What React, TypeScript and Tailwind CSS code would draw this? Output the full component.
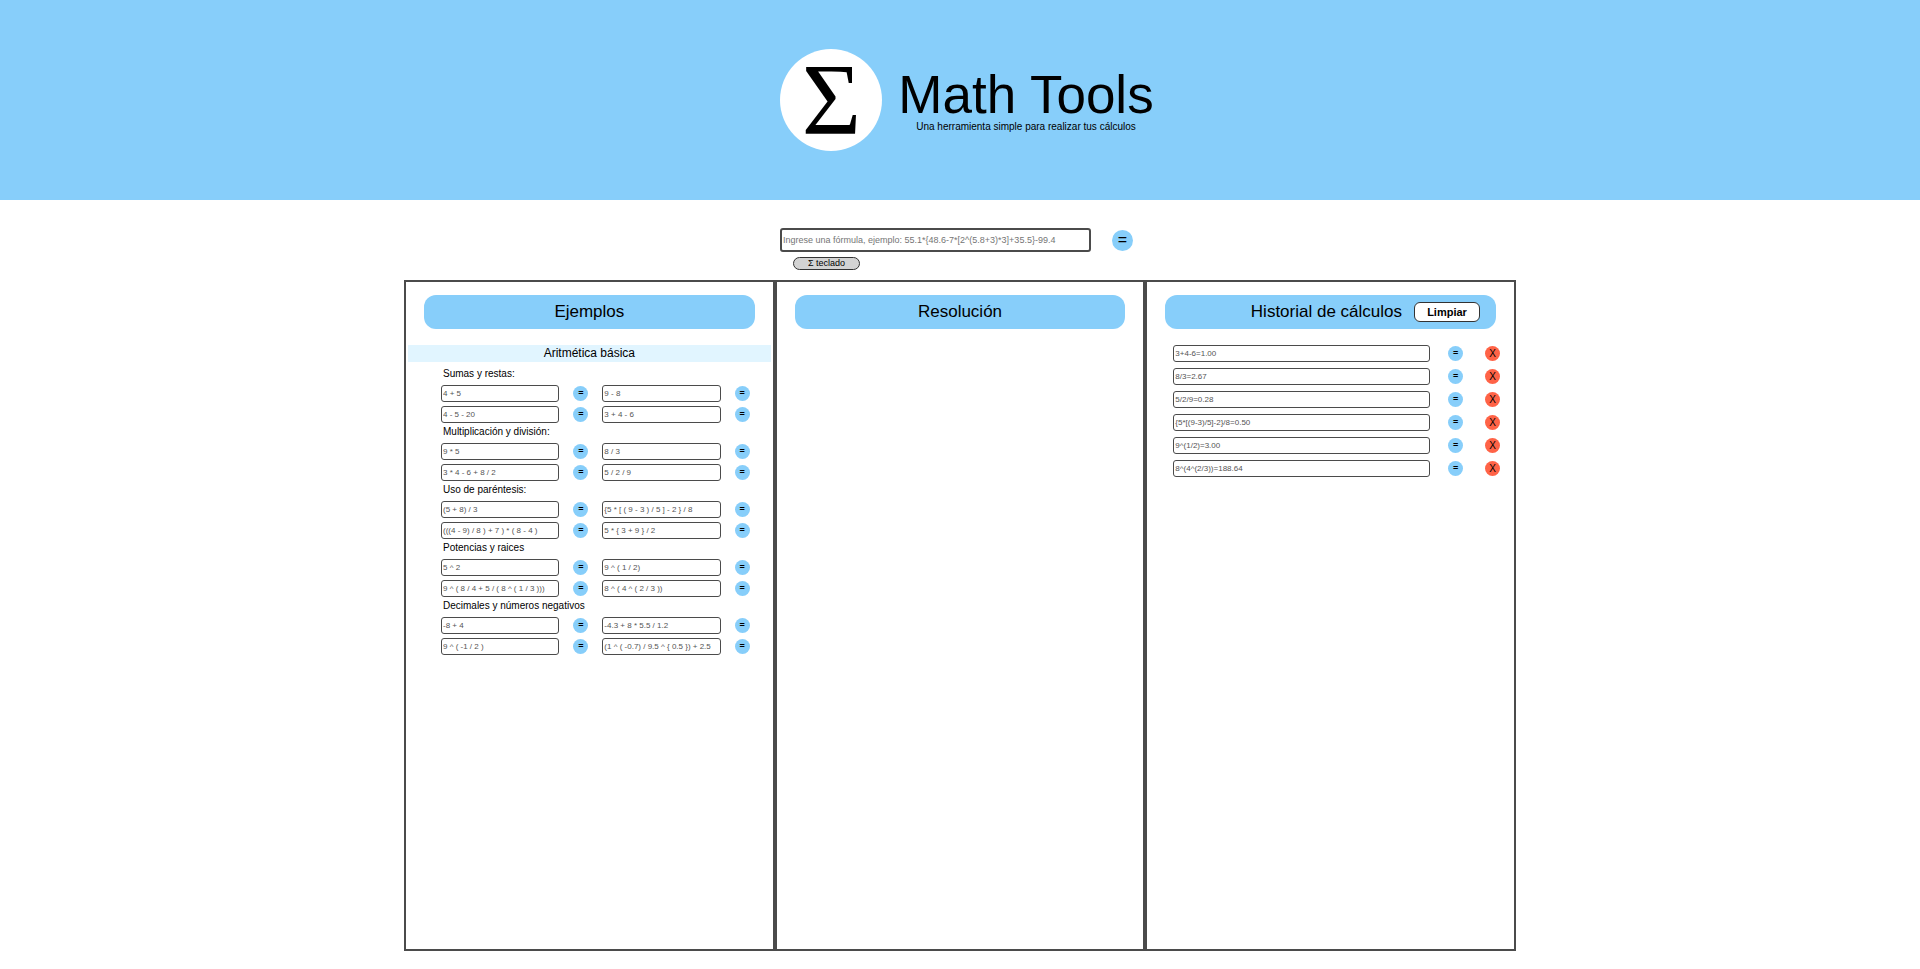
import { useState } from "react";

const groups = [
  { title: "Sumas y restas:", items: ["4 + 5", "9 - 8", "4 - 5 - 20", "3 + 4 - 6"] },
  { title: "Multiplicación y división:", items: ["9 * 5", "8 / 3", "3 * 4 - 6 + 8 / 2", "5 / 2 / 9"] },
  {
    title: "Uso de paréntesis:",
    items: ["(5 + 8) / 3", "{5 * [ ( 9 - 3 ) / 5 ] - 2 } / 8", "(((4 - 9) / 8 ) + 7 ) * ( 8 - 4 )", "5 * { 3 + 9 } / 2"],
  },
  {
    title: "Potencias y raices",
    items: ["5 ^ 2", "9 ^ ( 1 / 2)", "9 ^ ( 8 / 4 + 5 / ( 8 ^ ( 1 / 3 )))", "8 ^ ( 4 ^ ( 2 / 3 ))"],
  },
  {
    title: "Decimales y números negativos",
    items: ["-8 + 4", "-4.3 + 8 * 5.5 / 1.2", "9 ^ ( -1 / 2 )", "(1 ^ ( -0.7) / 9.5 ^ { 0.5 }) + 2.5"],
  },
];

const initialHistory = [
  "3+4-6=1.00",
  "8/3=2.67",
  "5/2/9=0.28",
  "{5*[(9-3)/5]-2}/8=0.50",
  "9^(1/2)=3.00",
  "8^(4^(2/3))=188.64",
];

const fieldClass =
  "h-[17px] min-w-0 flex-1 rounded-[3px] border border-[#4b4b4b] bg-white px-px text-[8px] leading-3 text-[#545454] outline-none";
const roundClass = "flex size-[15px] shrink-0 items-center justify-center rounded-full text-black";
const pillClass = "mt-[13px] mr-[18px] ml-[18px] flex h-[34px] items-center rounded-xl bg-[#87cefa]";
const headingClass = "text-[17px] leading-5";
const panelClass = "flex min-w-0 flex-1 flex-col border-2 border-[#4b4b4b]";

function Example({ value, onUse }: { value: string; onUse: (v: string) => void }) {
  return (
    <div className="flex min-w-0 flex-1 items-center gap-3.5">
      <input className={fieldClass} value={value} readOnly aria-label={`Ejemplo ${value}`} />
      <button
        type="button"
        aria-label={`Calcular ${value}`}
        onClick={() => onUse(value)}
        className={`${roundClass} bg-[#87cefa] text-[9px] leading-none font-bold`}
      >
        =
      </button>
    </div>
  );
}

export default function App() {
  const [formula, setFormula] = useState("");
  const [history, setHistory] = useState(initialHistory);

  return (
    <div className="flex min-h-screen flex-col bg-white font-['Liberation_Sans',Arial,sans-serif] text-black">
      <header className="flex h-[200px] items-center justify-center gap-4 bg-[#87cefa] pl-3.5">
        <div className="flex size-[102px] items-center justify-center rounded-full bg-white">
          <span className="font-['Liberation_Serif',serif] text-[102px] leading-[100px]">Σ</span>
        </div>
        <div className="flex flex-col items-center pt-0.5">
          <h1 className="text-[53px] leading-[52px]">Math Tools</h1>
          <p className="text-[10px] leading-3">Una herramienta simple para realizar tus cálculos</p>
        </div>
      </header>

      <main className="flex flex-1 flex-col items-center px-4 pb-[18px]">
        <form className="mt-7 flex w-[360px] flex-col" onSubmit={(e) => e.preventDefault()}>
          <div className="flex items-center justify-between">
            <input
              className="h-6 w-[311px] rounded-[3px] border-2 border-[#4b4b4b] px-px text-[9px] outline-none placeholder:text-[#757575]"
              aria-label="Fórmula"
              value={formula}
              onChange={(e) => setFormula(e.target.value)}
              placeholder="Ingrese una fórmula, ejemplo: 55.1*{48.6-7*[2^(5.8+3)*3]+35.5}-99.4"
            />
            <button
              type="submit"
              aria-label="Calcular"
              className="mr-[7px] flex size-[21px] items-center justify-center rounded-full bg-[#87cefa] text-[16px] leading-none"
            >
              =
            </button>
          </div>
          <button
            type="button"
            className="mt-[5px] ml-[13px] flex h-[13px] w-[67px] items-center justify-center rounded-full border border-[#333333] bg-[#d3d3d3] text-[9px] leading-none"
          >
            Σ teclado
          </button>
        </form>

        <div className="mt-2.5 flex w-full max-w-[1112px] flex-1">
          <section className={panelClass}>
            <div className={`${pillClass} justify-center`}>
              <h2 className={headingClass}>Ejemplos</h2>
            </div>
            <h3 className="mx-0.5 mt-4 bg-[#e1f5ff] text-center text-[12px] leading-[17px]">Aritmética básica</h3>
            <div className="mt-[3px] pr-[23px] pl-[35px]">
              {groups.map((g) => (
                <div key={g.title}>
                  <h4 className="pb-0.5 pl-0.5 text-[10px] leading-[18px]">{g.title}</h4>
                  <div className="flex flex-col gap-1">
                    {[0, 2].map((i) => (
                      <div key={i} className="flex gap-3.5">
                        <Example value={g.items[i]} onUse={setFormula} />
                        <Example value={g.items[i + 1]} onUse={setFormula} />
                      </div>
                    ))}
                  </div>
                </div>
              ))}
            </div>
          </section>

          <section className={panelClass}>
            <div className={`${pillClass} justify-center`}>
              <h2 className={headingClass}>Resolución</h2>
            </div>
          </section>

          <section className={panelClass}>
            <div className={`${pillClass} justify-end gap-3 pr-4`}>
              <h2 className={headingClass}>Historial de cálculos</h2>
              <button
                type="button"
                onClick={() => setHistory([])}
                className="flex h-5 w-[66px] items-center justify-center rounded-md border border-[#333333] bg-white text-[11px] leading-none font-bold"
              >
                Limpiar
              </button>
            </div>
            <ul className="mt-4 flex flex-col gap-1.5 pr-3.5 pl-[26px]">
              {history.map((h) => (
                <li key={h} className="flex items-center">
                  <input className={fieldClass} value={h} readOnly aria-label={`Cálculo ${h}`} />
                  <button
                    type="button"
                    aria-label={`Repetir ${h}`}
                    onClick={() => setFormula(h.split("=")[0])}
                    className={`${roundClass} ml-[18px] bg-[#87cefa] text-[9px] leading-none font-bold`}
                  >
                    =
                  </button>
                  <button
                    type="button"
                    aria-label={`Borrar ${h}`}
                    onClick={() => setHistory(history.filter((x) => x !== h))}
                    className={`${roundClass} ml-[22px] bg-[#ff6347] text-[10px] leading-none`}
                  >
                    X
                  </button>
                </li>
              ))}
            </ul>
          </section>
        </div>
      </main>
    </div>
  );
}
